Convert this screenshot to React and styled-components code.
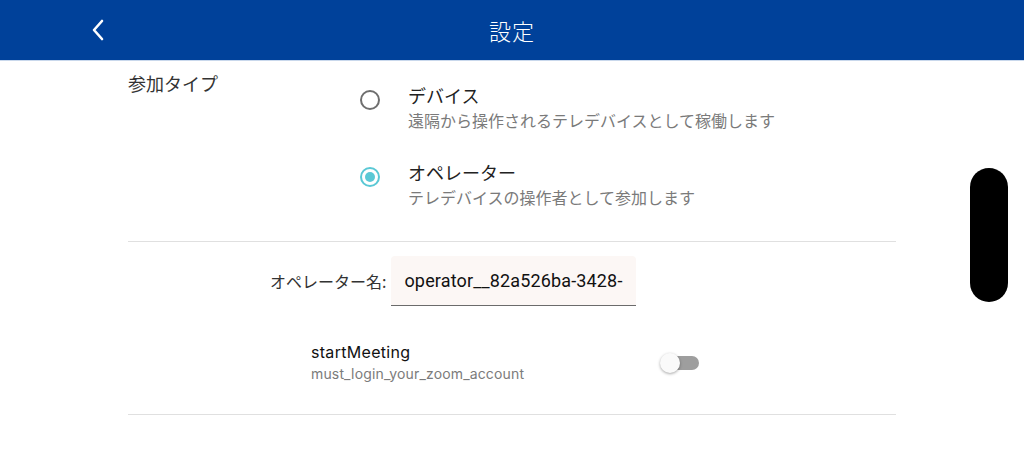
import React from "react";
import styled, { createGlobalStyle } from "styled-components";

const Global = createGlobalStyle`
  html, body { margin: 0; padding: 0; background: #fff; }
  body { font-family: Roboto, "Noto Sans CJK JP", sans-serif; overflow: hidden; }
  * { box-sizing: border-box; }
`;

const Page = styled.div`
  width: 1024px;
  height: 471px;
  background: #fff;
  position: relative;
  overflow: hidden;
`;

const Header = styled.header`
  height: 61px;
  background: #00419a;
  border-bottom: 1px solid #c9d8ec;
  display: grid;
  grid-template-columns: 1fr auto 1fr;
  align-items: center;
`;

const BackButton = styled.button`
  justify-self: start;
  margin-left: 86px;
  width: 24px;
  height: 30px;
  padding: 0;
  border: 0;
  background: none;
  display: flex;
  align-items: center;
  justify-content: center;
`;

const Title = styled.h1`
  margin: 0;
  font-family: "Noto Sans CJK JP", sans-serif;
  font-weight: 300;
  font-size: 22px;
  color: #fff;
  letter-spacing: 1px;
`;

const Content = styled.main`
  width: 768px;
  margin: 0 auto;
`;

const Section = styled.section`
  border-bottom: ${(p) => (p.$noLine ? "0" : "1px solid #e0e0e0")};
  padding: ${(p) => p.$pad};
`;

const TypeRow = styled.div`
  display: flex;
`;

const SectionLabel = styled.div`
  width: 232px;
  font-family: "Noto Sans CJK JP", sans-serif;
  font-size: 18px;
  color: #333;
  line-height: 24px;
`;

const RadioList = styled.div`
  display: flex;
  flex-direction: column;
  gap: 27px;
  padding-top: 12px;
`;

const RadioOption = styled.label`
  display: flex;
  align-items: flex-start;
`;

const RadioCircle = styled.span`
  width: 20px;
  height: 20px;
  margin-top: 7px;
  margin-right: 28px;
  border-radius: 50%;
  border: 2px solid ${(p) => (p.$checked ? "#5ac8d5" : "#6e6e6e")};
  display: flex;
  align-items: center;
  justify-content: center;
  &::after {
    content: "";
    width: 10px;
    height: 10px;
    border-radius: 50%;
    background: ${(p) => (p.$checked ? "#5ac8d5" : "transparent")};
  }
`;

const OptionText = styled.div`
  display: flex;
  flex-direction: column;
`;

const OptionTitle = styled.div`
  font-family: "Noto Sans CJK JP", sans-serif;
  font-size: 18px;
  line-height: 24px;
  color: #222;
`;

const OptionSub = styled.div`
  font-family: "Noto Sans CJK JP", sans-serif;
  font-size: 16px;
  line-height: 26px;
  color: #7a7a7a;
`;

const FieldRow = styled.div`
  display: flex;
  align-items: center;
  padding-left: 142px;
`;

const FieldLabel = styled.span`
  font-family: "Noto Sans CJK JP", sans-serif;
  font-size: 16px;
  color: #333;
  margin-right: 5px;
`;

const Input = styled.div`
  width: 245px;
  height: 50px;
  background: #fcf7f5;
  border-bottom: 1.5px solid #6b6b6b;
  border-radius: 4px 4px 0 0;
  padding: 0 13px;
  display: flex;
  align-items: center;
  font-family: Roboto, sans-serif;
  font-size: 18px;
  letter-spacing: 0.15px;
  color: #111;
  white-space: nowrap;
  overflow: hidden;
`;

const ToggleRow = styled.div`
  display: flex;
  align-items: center;
  justify-content: space-between;
  margin-left: 183px;
  width: 389px;
`;

const ToggleText = styled.div`
  display: flex;
  flex-direction: column;
`;

const ToggleTitle = styled.div`
  font-family: Inter, sans-serif;
  font-size: 16px;
  letter-spacing: 0.3px;
  line-height: 22px;
  color: #111;
`;

const ToggleSub = styled.div`
  font-family: Inter, sans-serif;
  font-size: 14px;
  letter-spacing: 0.15px;
  line-height: 22px;
  color: #7b7b7b;
`;

const Switch = styled.div`
  position: relative;
  width: 38px;
  height: 14px;
  border-radius: 7px;
  background: #9e9e9e;
  margin-right: 1px;
  &::after {
    content: "";
    position: absolute;
    left: -1px;
    top: -3px;
    width: 20px;
    height: 20px;
    border-radius: 50%;
    background: #fafafa;
    box-shadow: 0 1px 3px rgba(0, 0, 0, 0.35);
  }
`;

const Pill = styled.div`
  position: absolute;
  left: 970px;
  top: 168px;
  width: 38px;
  height: 134px;
  border-radius: 19px;
  background: #000;
`;

export default function App() {
  return (
    <>
      <Global />
      <Page>
        <Header>
          <BackButton aria-label="back">
            <svg width="14" height="22" viewBox="0 0 14 22">
              <polyline
                points="11,2 3,11 11,20"
                fill="none"
                stroke="#fff"
                strokeWidth="2.6"
                strokeLinecap="round"
                strokeLinejoin="round"
              />
            </svg>
          </BackButton>
          <Title>設定</Title>
          <span />
        </Header>
        <Content>
          <Section $pad="10px 0 31px">
            <TypeRow>
              <SectionLabel>参加タイプ</SectionLabel>
              <RadioList>
                <RadioOption>
                  <RadioCircle />
                  <OptionText>
                    <OptionTitle>デバイス</OptionTitle>
                    <OptionSub>遠隔から操作されるテレデバイスとして稼働します</OptionSub>
                  </OptionText>
                </RadioOption>
                <RadioOption>
                  <RadioCircle $checked />
                  <OptionText>
                    <OptionTitle>オペレーター</OptionTitle>
                    <OptionSub>テレデバイスの操作者として参加します</OptionSub>
                  </OptionText>
                </RadioOption>
              </RadioList>
            </TypeRow>
          </Section>
          <Section $pad="14px 0 0" $noLine>
            <FieldRow>
              <FieldLabel>オペレーター名:</FieldLabel>
              <Input>operator__82a526ba-3428-</Input>
            </FieldRow>
          </Section>
          <Section $pad="35px 0 29px">
            <ToggleRow>
              <ToggleText>
                <ToggleTitle>startMeeting</ToggleTitle>
                <ToggleSub>must_login_your_zoom_account</ToggleSub>
              </ToggleText>
              <Switch />
            </ToggleRow>
          </Section>
        </Content>
        <Pill />
      </Page>
    </>
  );
}
